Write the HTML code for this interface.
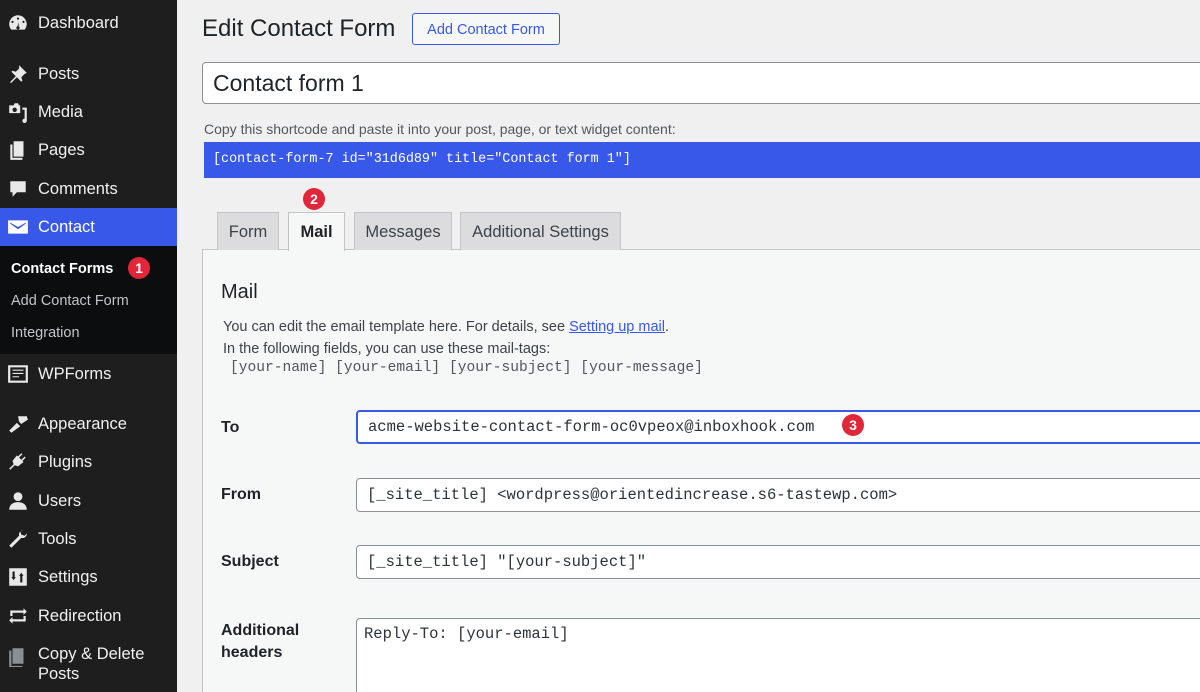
<!DOCTYPE html>
<html><head><meta charset="utf-8"><style>
*{box-sizing:border-box;margin:0;padding:0}
html,body{width:1200px;height:692px;overflow:hidden}
body{background:#f0f0f1;font-family:"Liberation Sans",sans-serif;position:relative;color:#1d2327}
#sb{position:absolute;left:0;top:0;width:177px;height:692px;background:#1e1e1e}
.mi{position:absolute;left:0;width:177px;height:38px;color:#f0f0f1;font-size:16.5px;line-height:38px;padding-left:38px}
.mi svg{position:absolute;left:7px;top:8px;width:22px;height:22px;fill:#e8e8e8}
.sub{position:absolute;left:0;top:246px;width:177px;height:108px;background:#0c0d0e}
.sub div{position:absolute;left:11px;font-size:14.5px;color:#c3c4c7}
.badge{display:inline-block;width:22px;height:22px;border-radius:50%;background:#e2263a;color:#fff;font-size:14px;font-weight:bold;text-align:center;line-height:22px;position:absolute}
.mono{font-family:"Liberation Mono",monospace}
.inp{position:absolute;background:#fff;border:1px solid #8c8f94;border-radius:4px;height:34px;line-height:32px;padding-left:10px;font-size:15.5px;color:#2c3338;left:356px;width:860px}
.lbl{position:absolute;left:221px;font-size:16px;font-weight:bold;color:#1d2327}
.tab{position:absolute;top:212px;height:38px;background:#dcdcde;border:1px solid #c3c4c7;border-bottom:none;font-size:16.5px;color:#3c434a;line-height:38px;text-align:center}
</style></head><body>
<div id="sb">
<div class="mi" style="top:4px"><svg viewBox="0 0 20 20"><path d="M10 3a8 8 0 0 0-8 8c0 2 .7 3.7 1.9 5h12.2A8 8 0 0 0 10 3zm0 2a1 1 0 1 1 0 2 1 1 0 0 1 0-2zM5 8a1 1 0 1 1 0 2 1 1 0 0 1 0-2zm10 0a1 1 0 1 1 0 2 1 1 0 0 1 0-2zm-4 1l-.5 4a1.5 1.5 0 1 1-1 0z"/></svg>Dashboard</div>
<div class="mi" style="top:55px"><svg viewBox="0 0 20 20"><path d="M11 2l7 7-2 1-3 3 1 3-1 1-4-4-5 5H3v-1l5-5-4-4 1-1 3 1 3-3z"/></svg>Posts</div>
<div class="mi" style="top:93px"><svg viewBox="0 0 20 20"><path d="M2 4h4l1-2h3l1 2h1v7H2zm5 2a2 2 0 1 0 0 4 2 2 0 0 0 0-4zm7 0h4v12a2 2 0 1 1-2-2V8h-2z"/></svg>Media</div>
<div class="mi" style="top:131px"><svg viewBox="0 0 20 20"><path d="M6 2h9v14H6zM3 5h2v12h9v2H3z"/></svg>Pages</div>
<div class="mi" style="top:170px"><svg viewBox="0 0 20 20"><path d="M3 3h14v10h-8l-4 4v-4H3z"/></svg>Comments</div>
<div class="mi" style="top:208px;background:#3858e9;color:#fff"><svg viewBox="0 0 20 20" style="fill:#fff"><path d="M1 4h18v12H1zm2 2v1l7 5 7-5V6l-7 4z"/></svg>Contact</div>
<div style="position:absolute;left:169px;top:219px;width:0;height:0;border:8px solid transparent;border-right-color:#f0f0f1"></div>
<div class="sub">
<div style="top:15px;color:#fff;font-weight:bold">Contact Forms</div>
<span class="badge" style="left:128px;top:11px">1</span>
<div style="top:47px">Add Contact Form</div>
<div style="top:79px">Integration</div>
</div>
<div class="mi" style="top:355px"><svg viewBox="0 0 20 20"><path d="M1 2h18v16H1zm2 2v12h14V4zm2 2h10v1H5zm0 3h10v1H5zm0 3h6v1H5z"/></svg>WPForms</div>
<div class="mi" style="top:405px"><svg viewBox="0 0 20 20"><path d="M10 3l8 0 1 3-6 4-2-2zM9 9l3 3-8 6-2-2z"/></svg>Appearance</div>
<div class="mi" style="top:443px"><svg viewBox="0 0 20 20"><path d="M13 2l1 1-3 3 2 2 3-3 1 1-3 3 1 1-5 4-3-1-4 4-1-1 4-4-1-3 4-5 1 1z"/></svg>Plugins</div>
<div class="mi" style="top:482px"><svg viewBox="0 0 20 20"><circle cx="10" cy="6" r="4"/><path d="M2 18c0-5 4-7 8-7s8 2 8 7z"/></svg>Users</div>
<div class="mi" style="top:520px"><svg viewBox="0 0 20 20"><path d="M15 2a4 4 0 0 0-4 5L2 16l2 2 9-9a4 4 0 0 0 5-4l-2 2-3-1-1-3z"/></svg>Tools</div>
<div class="mi" style="top:558px"><svg viewBox="0 0 20 20"><path d="M2 2h16v16H2zm3 3v5H4l2 3 2-3H7V5zm7 10h2V9h1l-2-3-2 3h1z"/></svg>Settings</div>
<div class="mi" style="top:597px"><svg viewBox="0 0 20 20"><path d="M3 5h12V3l3 3-3 3V7H5v3H3zm14 10H5v2l-3-3 3-3v2h10v-3h2z"/></svg>Redirection</div>
<div class="mi" style="top:635px;line-height:20px;padding-top:9px"><svg viewBox="0 0 20 20" style="fill:#8c8f94;top:10px"><path d="M5 3h10v14H5zM2 5h2v14h10v1H2z"/></svg>Copy &amp; Delete<br>Posts</div>
</div>

<div style="position:absolute;left:202px;top:15px;font-size:24px;color:#1d2327">Edit Contact Form</div>
<div style="position:absolute;left:412px;top:13px;width:148px;height:32px;border:1px solid #3858e9;border-radius:3px;background:#f6f7f7;color:#3858e9;font-size:14.5px;line-height:32px;text-align:center">Add Contact Form</div>
<div style="position:absolute;left:202px;top:62px;width:1010px;height:42px;background:#fff;border:1px solid #8c8f94;border-radius:4px;font-size:23px;line-height:40px;padding-left:10px">Contact form 1</div>
<div style="position:absolute;left:204px;top:121px;font-size:14px;color:#50575e">Copy this shortcode and paste it into your post, page, or text widget content:</div>
<div class="mono" style="position:absolute;left:204px;top:142px;width:1000px;height:36px;background:#3858e9;color:#fff;font-size:13.4px;line-height:36px;padding-left:9px">[contact-form-7 id="31d6d89" title="Contact form 1"]</div>

<div style="position:absolute;left:202px;top:249px;width:1010px;height:450px;background:#f6f7f7;border:1px solid #c3c4c7"></div>
<div class="tab" style="left:217px;width:62px">Form</div>
<div class="tab" style="left:288px;width:57px;height:39px;background:#f6f7f7;color:#1d2327;font-weight:bold">Mail</div>
<div class="tab" style="left:354px;width:98px">Messages</div>
<div class="tab" style="left:460px;width:161px">Additional Settings</div>
<span class="badge" style="left:303px;top:188px">2</span>

<div style="position:absolute;left:221px;top:281px;font-size:20px">Mail</div>
<div style="position:absolute;left:223px;top:316px;font-size:14.5px;line-height:22px;color:#3c434a">You can edit the email template here. For details, see <span style="text-decoration:underline;color:#3858e9">Setting up mail</span>.<br>In the following fields, you can use these mail-tags:</div>
<div class="mono" style="position:absolute;left:230px;top:360px;font-size:14.6px;color:#50575e">[your-name] [your-email] [your-subject] [your-message]</div>

<div class="lbl" style="top:419px">To</div>
<div class="inp mono" style="top:410px;border:2px solid #3858e9;line-height:30px">acme-website-contact-form-oc0vpeox@inboxhook.com</div>
<span class="badge" style="left:842px;top:414px">3</span>
<div class="lbl" style="top:486px">From</div>
<div class="inp mono" style="top:478px">[_site_title] &lt;wordpress@orientedincrease.s6-tastewp.com&gt;</div>
<div class="lbl" style="top:553px">Subject</div>
<div class="inp mono" style="top:545px">[_site_title] "[your-subject]"</div>
<div class="lbl" style="top:620px;line-height:22px">Additional<br>headers</div>
<div class="inp mono" style="top:618px;height:80px;padding-left:7px;line-height:30px">Reply-To: [your-email]</div>
</body></html>
